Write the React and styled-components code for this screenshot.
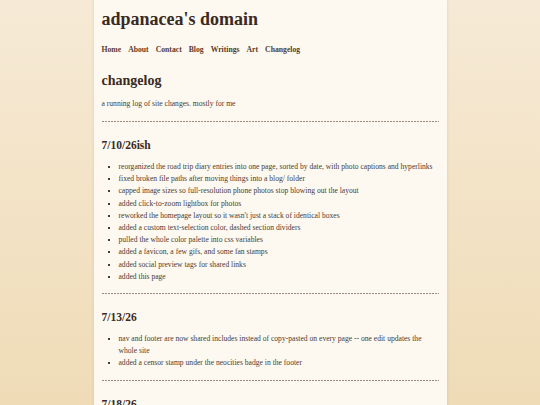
import React from "react";
import styled, { createGlobalStyle } from "styled-components";

const Global = createGlobalStyle`
  html, body { margin: 0; padding: 0; }
  body {
    min-height: 100vh;
    background: linear-gradient(180deg, #f6ead6 0%, #efdbb6 100%);
    background-attachment: fixed;
    font-family: "Liberation Serif", "Times New Roman", serif;
    color: #4a3b32;
  }
`;

const Page = styled.div`
  width: 353px;
  margin: 0 auto;
  min-height: 100vh;
  background: #fdf9f1;
  box-sizing: border-box;
  padding: 8px 8px 20px;
  box-shadow: 0 0 3px rgba(170, 130, 70, 0.25);
`;

const Title = styled.h1`
  margin: 0;
  font-family: "Liberation Serif", "Times New Roman", serif;
  font-weight: bold;
  font-size: 18px;
  line-height: 22px;
  color: #3a2a22;
`;

const Nav = styled.nav`
  display: flex;
  gap: 7px;
  margin-top: 15px;
`;

const NavLink = styled.a`
  font-size: 7.7px;
  font-weight: bold;
  color: #5a3b2c;
  text-decoration: none;
`;

const PageHeading = styled.h2`
  margin: 18px 0 0;
  font-weight: bold;
  font-size: 14px;
  line-height: 18px;
  color: #3a2a22;
`;

const Intro = styled.p`
  margin: 8px 0 0;
  font-size: 7.6px;
  line-height: 12px;
`;

const Divider = styled.hr`
  border: 0;
  height: 1px;
  background: repeating-linear-gradient(
    90deg,
    #9c8b7d 0px,
    #9c8b7d 2px,
    transparent 2px,
    transparent 3px
  );
  margin: ${(p) => (p.$first ? "11px 0 0" : "0")};
`;

const Section = styled.section`
  padding-top: 15px;
  padding-bottom: 10px;
`;

const DateHeading = styled.h3`
  margin: 0;
  font-size: 11.5px;
  line-height: 16px;
  font-weight: bold;
  color: #3a2a22;
`;

const List = styled.ul`
  margin: 8px 0 0;
  padding-left: 17px;
  list-style: square;
`;

const Item = styled.li`
  font-size: 7.6px;
  line-height: 12.2px;
  color: #4a3b32;
`;

const log = [
  {
    date: "7/10/26ish",
    items: [
      "reorganized the road trip diary entries into one page, sorted by date, with photo captions and hyperlinks",
      "fixed broken file paths after moving things into a blog/ folder",
      "capped image sizes so full-resolution phone photos stop blowing out the layout",
      "added click-to-zoom lightbox for photos",
      "reworked the homepage layout so it wasn't just a stack of identical boxes",
      "added a custom text-selection color, dashed section dividers",
      "pulled the whole color palette into css variables",
      "added a favicon, a few gifs, and some fan stamps",
      "added social preview tags for shared links",
      "added this page",
    ],
  },
  {
    date: "7/13/26",
    items: [
      "nav and footer are now shared includes instead of copy-pasted on every page -- one edit updates the whole site",
      "added a censor stamp under the neocities badge in the footer",
    ],
  },
  {
    date: "7/18/26",
    items: ["tweaked a few things"],
  },
];

const links = ["Home", "About", "Contact", "Blog", "Writings", "Art", "Changelog"];

export default function App() {
  return (
    <>
      <Global />
      <Page>
        <Title>adpanacea's domain</Title>
        <Nav>
          {links.map((l) => (
            <NavLink key={l} href="#">{l}</NavLink>
          ))}
        </Nav>
        <PageHeading>changelog</PageHeading>
        <Intro>a running log of site changes. mostly for me</Intro>
        <Divider $first />
        {log.map((s, i) => (
          <React.Fragment key={s.date}>
            <Section>
              <DateHeading>{s.date}</DateHeading>
              <List>
                {s.items.map((t) => (
                  <Item key={t}>{t}</Item>
                ))}
              </List>
            </Section>
            {i < log.length - 1 && <Divider />}
          </React.Fragment>
        ))}
      </Page>
    </>
  );
}
